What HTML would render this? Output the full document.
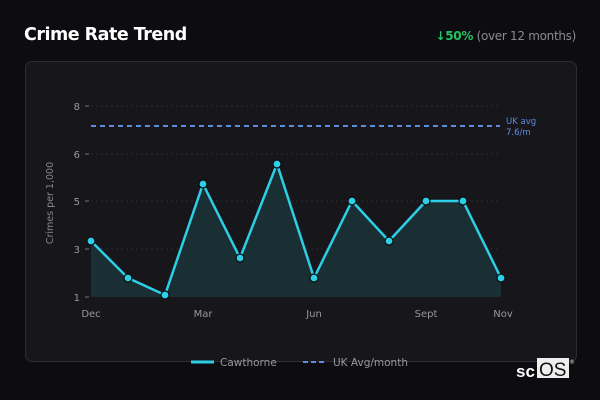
<!DOCTYPE html><html><head><style>
body{margin:0;width:600px;height:400px;background:#0c0c11;overflow:hidden;font-family:"Liberation Sans","DejaVu Sans",sans-serif;position:relative}
.t{position:absolute;left:24px;top:25px;color:#fff;font-weight:bold;font-size:17.5px;font-family:"DejaVu Sans",sans-serif;letter-spacing:-0.5px}
.s{position:absolute;right:24px;top:29px;font-size:12px;color:#8a8a90;font-family:"DejaVu Sans",sans-serif;letter-spacing:-0.3px}
.s b{color:#22c55e}
.card{position:absolute;left:25px;top:61px;width:550px;height:299px;border:1px solid #2d2d33;border-radius:7px;background:#17171b}
svg{position:absolute;left:0;top:0}
</style></head><body>
<div class="t">Crime Rate Trend</div>
<div class="s"><b>↓50%</b> (over 12 months)</div>
<div class="card"></div>
<svg width="600" height="400" font-family="DejaVu Sans,sans-serif">
<g stroke="#2a2a2f" stroke-dasharray="2 3" stroke-width="1">
<line x1="91" y1="106" x2="500" y2="106"/><line x1="91" y1="154" x2="500" y2="154"/><line x1="91" y1="201" x2="500" y2="201"/><line x1="91" y1="249" x2="500" y2="249"/>
</g>
<g stroke="#777" stroke-width="1"><line x1="85" y1="106" x2="89" y2="106"/><line x1="85" y1="154" x2="89" y2="154"/><line x1="85" y1="201" x2="89" y2="201"/><line x1="85" y1="249" x2="89" y2="249"/><line x1="85" y1="297" x2="89" y2="297"/></g>
<g fill="#999" font-size="10" text-anchor="end"><text x="80" y="110">8</text><text x="80" y="158">6</text><text x="80" y="205">5</text><text x="80" y="253">3</text><text x="80" y="301">1</text></g>
<text transform="translate(53,203) rotate(-90)" fill="#888" font-size="9.5" text-anchor="middle">Crimes per 1,000</text>
<g fill="#999" font-size="10" text-anchor="middle"><text x="91" y="317">Dec</text><text x="203" y="317">Mar</text><text x="314" y="317">Jun</text><text x="426" y="317">Sept</text><text x="503" y="317">Nov</text></g>
<line x1="91" y1="126" x2="500" y2="126" stroke="#5b8de0" stroke-width="2" stroke-dasharray="5 4"/>
<text x="506" y="124" fill="#5b8de0" font-size="8.5">UK avg</text><text x="506" y="135" fill="#5b8de0" font-size="8.5">7.6/m</text>
<path d="M91,241 L128,278 L165,295 L203,184 L240,258 L277,164 L314,278 L352,201 L389,241 L426,201 L463,201 L501,278 L501,297 L91,297Z" fill="#1a3438" opacity="0.85"/>
<path d="M91,241 L128,278 L165,295 L203,184 L240,258 L277,164 L314,278 L352,201 L389,241 L426,201 L463,201 L501,278" fill="none" stroke="#2ccfe6" stroke-width="2.5" stroke-linejoin="round"/>
<g fill="#2ccfe6" stroke="#0c0c11" stroke-width="1.2">
<circle cx="91" cy="241" r="4"/><circle cx="128" cy="278" r="4"/><circle cx="165" cy="295" r="4"/><circle cx="203" cy="184" r="4"/><circle cx="240" cy="258" r="4"/><circle cx="277" cy="164" r="4"/><circle cx="314" cy="278" r="4"/><circle cx="352" cy="201" r="4"/><circle cx="389" cy="241" r="4"/><circle cx="426" cy="201" r="4"/><circle cx="463" cy="201" r="4"/><circle cx="501" cy="278" r="4"/>
</g>
<line x1="191" y1="362" x2="214" y2="362" stroke="#2ccfe6" stroke-width="3"/>
<text x="220" y="366" fill="#999" font-size="10.5">Cawthorne</text>
<line x1="303" y1="362" x2="326" y2="362" stroke="#5b8de0" stroke-width="2" stroke-dasharray="5 3"/>
<text x="333" y="366" fill="#999" font-size="10.5">UK Avg/month</text>
<text x="516" y="377" fill="#fff" font-size="17" font-weight="bold" font-family="Liberation Sans,sans-serif">sc</text>
<rect x="537" y="358" width="32" height="20" fill="#eee"/>
<text x="539" y="376" fill="#111" font-size="19" font-family="Liberation Sans,sans-serif">OS</text>
<text x="569" y="364" fill="#ccc" font-size="6">®</text>
</svg>
</body></html>
